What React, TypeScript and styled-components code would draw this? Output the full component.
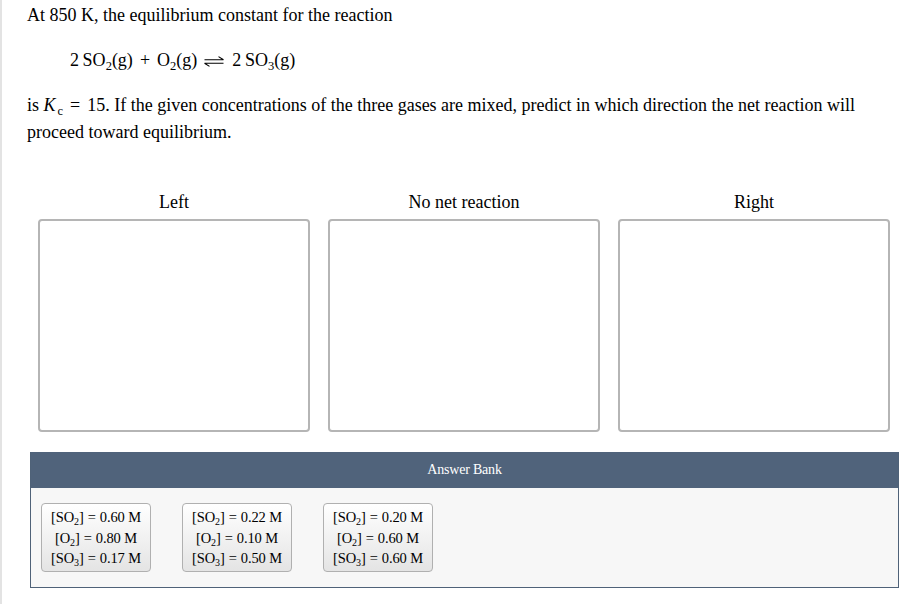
import React from "react";
import styled, { createGlobalStyle } from "styled-components";

const Global = createGlobalStyle`
  html, body { margin: 0; padding: 0; background: #fff; }
  body { font-family: "Liberation Serif", "Times New Roman", serif; color: #000; }
`;

const Page = styled.div`
  border-left: 2px solid #e3e3e3;
  min-height: 604px;
  box-sizing: border-box;
  padding: 2px 0 0 25px;
  width: 921px;
`;

const Para = styled.p`
  margin: 0;
  font-size: 18px;
  line-height: 27px;
  width: 860px;
`;

const Equation = styled.div`
  font-size: 18px;
  line-height: 27px;
  margin: 18px 0 18px 43px;
  white-space: nowrap;
`;

const Sub = styled.sub`
  font-size: 12.5px;
  vertical-align: -4px;
  line-height: 0;
`;

const Op = styled.span`
  margin: 0 7px;
`;

const Arrow = styled.svg`
  margin: 0 8px 0 7px;
  vertical-align: -1px;
`;

const Italic = styled.i`
  font-weight: normal;
  margin-right: 2px;
`;

const Columns = styled.div`
  display: grid;
  grid-template-columns: repeat(3, 272px);
  column-gap: 18px;
  margin: 46px 0 0 11px;
`;

const Column = styled.div`
  display: flex;
  flex-direction: column;
  align-items: center;
`;

const Heading = styled.div`
  font-size: 18px;
  line-height: 20px;
  height: 20px;
  margin-bottom: 7px;
`;

const DropBox = styled.div`
  width: 272px;
  height: 213px;
  box-sizing: border-box;
  border: 2px solid #b5b5b5;
  border-radius: 4px;
  background: #fff;
`;

const Bank = styled.div`
  margin: 20px 0 0 3px;
  width: 869px;
  box-sizing: border-box;
  border: 1px solid #4f6278;
  border-top: none;
`;

const BankHeader = styled.div`
  background: #50637b;
  height: 36px;
  color: #fff;
  font-size: 14px;
  display: flex;
  align-items: center;
  justify-content: center;
  letter-spacing: -0.2px;
`;

const BankBody = styled.div`
  background: #f7f7f7;
  padding: 15px 10px 15px 10px;
  display: flex;
  gap: 31px;
`;

const Tile = styled.div`
  width: 110px;
  height: 69px;
  box-sizing: border-box;
  border: 1px solid #b0b0b0;
  border-radius: 4px;
  background: linear-gradient(#ffffff, #e4e4e4);
  font-size: 14.5px;
  line-height: 20.5px;
  display: flex;
  flex-direction: column;
  align-items: center;
  justify-content: center;
  padding-top: 1px;
  letter-spacing: -0.1px;
  white-space: nowrap;
`;

const TSub = styled.sub`
  font-size: 10px;
  vertical-align: -3px;
  line-height: 0;
`;

const Eq = styled.span`
  margin: 0 4px;
`;

const tiles = [
  ["0.60", "0.80", "0.17"],
  ["0.22", "0.10", "0.50"],
  ["0.20", "0.60", "0.60"],
];

export default function App() {
  return (
    <>
      <Global />
      <Page>
        <Para>At 850 K, the equilibrium constant for the reaction</Para>
        <Equation>
          2&thinsp;SO<Sub>2</Sub>(g)
          <Op>+</Op>O<Sub>2</Sub>(g)
          <Arrow width="20" height="11" viewBox="0 0 20 11">
            <path d="M0.5 3.8 H19.5 M19.5 3.8 L14.5 0.6" stroke="#000" strokeWidth="1.1" fill="none" />
            <path d="M0.5 7.2 H19.5 M0.5 7.2 L5.5 10.4" stroke="#000" strokeWidth="1.1" fill="none" />
          </Arrow>
          2&thinsp;SO<Sub>3</Sub>(g)
        </Equation>
        <Para>
          is <Italic>K</Italic>
          <Sub>c</Sub>
          <Op>=</Op>15. If the given concentrations of the three gases are mixed, predict in which
          direction the net reaction will proceed toward equilibrium.
        </Para>
        <Columns>
          {["Left", "No net reaction", "Right"].map((h) => (
            <Column key={h}>
              <Heading>{h}</Heading>
              <DropBox />
            </Column>
          ))}
        </Columns>
        <Bank>
          <BankHeader>Answer Bank</BankHeader>
          <BankBody>
            {tiles.map((t, i) => (
              <Tile key={i}>
                <div>
                  [SO<TSub>2</TSub>]<Eq>=</Eq>{t[0]} M
                </div>
                <div>
                  [O<TSub>2</TSub>]<Eq>=</Eq>{t[1]} M
                </div>
                <div>
                  [SO<TSub>3</TSub>]<Eq>=</Eq>{t[2]} M
                </div>
              </Tile>
            ))}
          </BankBody>
        </Bank>
      </Page>
    </>
  );
}
